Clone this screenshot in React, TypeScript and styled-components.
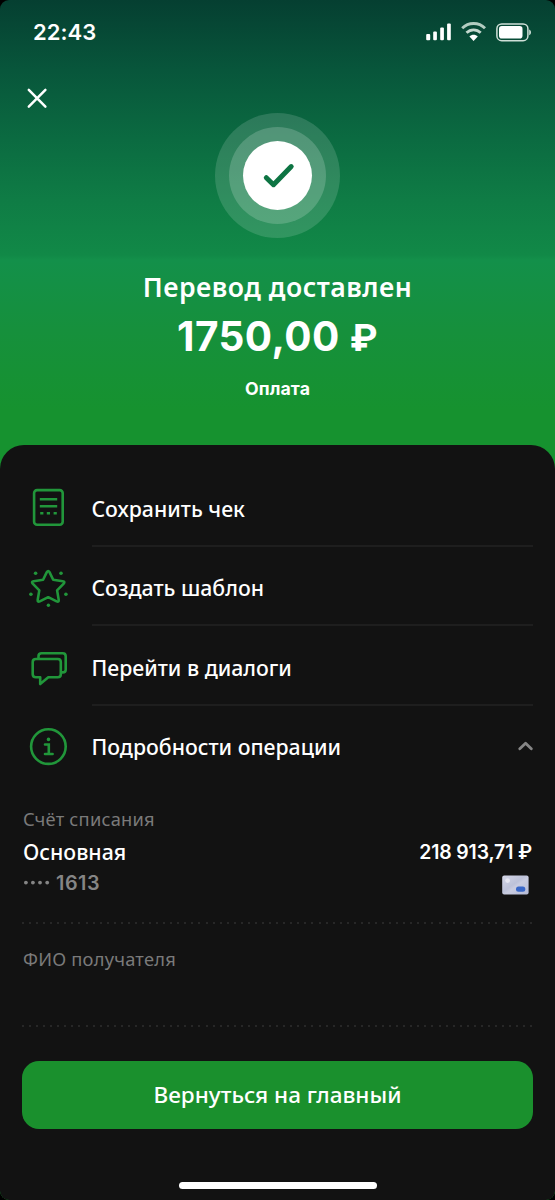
import React from "react";
import styled, { createGlobalStyle } from "styled-components";

const text = '"Noto Sans", "Open Sans", sans-serif';
const digits = 'Inter, "Liberation Sans", sans-serif';
const green = "#21963a";

const GlobalStyle = createGlobalStyle`
  *, *::before, *::after { box-sizing: border-box; }
  body { margin: 0; background: #000; }
  button { font: inherit; color: inherit; border: 0; padding: 0; background: none; }
  svg { display: block; flex: none; }
`;

const Screen = styled.div`
  width: 555px;
  height: 1200px;
  display: flex;
  flex-direction: column;
  overflow: hidden;
  border-radius: 9px;
  color: #fff;
  font-family: ${text};
  background: linear-gradient(
    180deg,
    #053f31 0px,
    #08563b 70px,
    #0b6b41 140px,
    #0f7c45 200px,
    #118947 255px,
    #13904a 260px,
    #16903c 330px,
    #16922f 410px,
    #16922f 480px
  );
`;

const StatusBar = styled.header`
  height: 64px;
  display: flex;
  align-items: center;
  justify-content: space-between;
  padding: 0 23px 0 33px;
`;

const Clock = styled.time`
  font: 600 22px/26px ${digits};
  letter-spacing: 0.05px;
`;

const StatusIcons = styled.div`
  display: flex;
  align-items: center;
  gap: 9px;
`;

const CloseButton = styled.button`
  width: 24px;
  height: 24px;
  margin: 22px 0 0 25px;
`;

const Summary = styled.section`
  display: flex;
  flex-direction: column;
  align-items: center;
  margin-top: 2.5px;
  height: 332.5px;
`;

const Ring = styled.div<{ $size: number; $fill: string }>`
  width: ${(p) => p.$size}px;
  height: ${(p) => p.$size}px;
  flex: none;
  display: flex;
  align-items: center;
  justify-content: center;
  border-radius: 50%;
  background: ${(p) => p.$fill};
`;

const Title = styled.h1`
  margin: 31.5px 0 0;
  font: 600 26.6px/36px ${text};
  letter-spacing: 0.5px;
`;

const Amount = styled.div`
  margin-top: 8px;
  font: 700 40.5px/48px ${digits};
  letter-spacing: 0.45px;
`;

const Currency = styled.span`
  font-size: 37.5px;
`;

const Purpose = styled.div`
  margin-top: 16px;
  font: 700 17.7px/22px ${digits};
  letter-spacing: 0.1px;
`;

const Sheet = styled.main`
  flex: 1;
  display: flex;
  flex-direction: column;
  padding: 22px 22px 0;
  border-radius: 24px 24px 0 0;
  background: #121212;
`;

const Action = styled.button<{ $last?: boolean }>`
  display: flex;
  align-items: center;
  height: ${(p) => (p.$last ? 80 : 79.6)}px;
  padding-left: 6px;
  text-align: left;
`;

const ActionBody = styled.span<{ $divided?: boolean }>`
  flex: 1;
  height: 100%;
  display: flex;
  align-items: center;
  justify-content: space-between;
  margin-left: 23.5px;
  padding-top: ${(p) => (p.$divided ? 6 : 2)}px;
  font: 500 21.25px/28px ${text};
  border-bottom: ${(p) => (p.$divided ? "2px solid #1e1e1e" : "0")};
`;

const Details = styled.dl`
  margin: 0;
  padding: 21px 1px 0 1px;
`;

const Caption = styled.dt`
  font: 400 18.3px/24px ${text};
  letter-spacing: 0.22px;
  color: #7a7a7a;
`;

const Account = styled.dd`
  margin: 0;
  display: flex;
  justify-content: space-between;
`;

const AccountSide = styled.div<{ $end?: boolean }>`
  display: flex;
  flex-direction: column;
  align-items: ${(p) => (p.$end ? "flex-end" : "flex-start")};
`;

const AccountName = styled.span`
  margin-top: 7px;
  font: 500 21.3px/28px ${text};
`;

const Balance = styled.span`
  margin-top: 8px;
  font: 600 19.4px/26px ${digits};
  letter-spacing: -0.12px;
`;

const CardNumber = styled.span`
  display: flex;
  align-items: center;
  gap: 6px;
  margin-top: 5px;
  font: 600 19.8px/24px ${digits};
  letter-spacing: 0.55px;
  color: #858585;
`;

const CardThumb = styled.span`
  display: block;
  margin: 10px 3px 0 0;
`;

const DottedRule = styled.hr`
  height: 2px;
  margin: 0;
  border: 0;
  background: repeating-linear-gradient(90deg, #272727 0 2px, transparent 2px 7.06px);
`;

const Recipient = styled.div`
  height: 101px;
  padding: 23px 1px 0;
`;

const HomeButton = styled.button`
  height: 68px;
  margin-top: 34px;
  border-radius: 17px;
  background: #1a902d;
  font: 500 22.5px/28px ${text};
`;

const HomeIndicator = styled.div`
  width: 198px;
  height: 7px;
  margin: 53px auto 0;
  border-radius: 4px;
  background: #fff;
`;

const SignalIcon = () => (
  <svg width="26" height="18" viewBox="0 0 26 18" fill="#fff">
    <rect x="0.2" y="11" width="4" height="6.3" rx="1" />
    <rect x="7.2" y="8.5" width="3.7" height="8.8" rx="1" />
    <rect x="14.2" y="4.5" width="3.7" height="12.8" rx="1" />
    <rect x="21.1" y="0.5" width="3.7" height="16.8" rx="1" />
  </svg>
);

const WifiIcon = () => (
  <svg width="26" height="20" viewBox="0 0 26 20" fill="none" strokeWidth="2.8">
    <path d="M1.2 6.3C7.4 -.1 17.8 -.1 24 6.3" stroke="#b3cdc1" />
    <path d="M5.5 10.8c4.1-4 10.1-4 14.2 0" stroke="#c4d8ce" />
    <path d="M8.4 14.5c2.4-2.2 6-2.2 8.4 0L12.6 18.9z" fill="#fff" />
  </svg>
);

const BatteryIcon = () => (
  <svg width="36" height="19" viewBox="0 0 36 19">
    <rect x="0.9" y="0.9" width="31" height="16.8" rx="4.8" fill="none" stroke="#cfe0d8" strokeWidth="1.5" />
    <rect x="3" y="3" width="23.5" height="12.6" rx="2.8" fill="#fff" />
    <path d="M33.2 6.5c2.4 1.1 2.4 4.6 0 5.7z" fill="#cfe0d8" />
  </svg>
);

const CloseIcon = () => (
  <svg width="24" height="24" viewBox="0 0 24 24" stroke="#fff" strokeWidth="2.5" strokeLinecap="round">
    <path d="M3.8 3.8l16.6 16.8M20.4 3.8L3.8 20.6" />
  </svg>
);

const CheckIcon = () => (
  <svg width="34" height="28" viewBox="0 0 34 28" fill="none" stroke="#0d7443" strokeWidth="5" strokeLinecap="round" strokeLinejoin="round">
    <path d="M5.3 16.7l7.2 7L30.2 5.6" />
  </svg>
);

const ReceiptIcon = () => (
  <svg width="40" height="40" viewBox="0 0 40 40" fill="none" stroke={green} strokeWidth="2.6">
    <rect x="6.1" y="3.1" width="28.6" height="34.6" rx="3" />
    <path d="M11.8 12.2h17.4M11.8 19.2h17.4M12.2 26.2h3.2M18.8 26.2H22M25.6 26.2h3.2" />
  </svg>
);

const StarIcon = () => (
  <svg width="40" height="42" viewBox="0 -2.8 40 42" fill="none" stroke={green} strokeWidth="2.6" strokeLinejoin="round">
    <path d="M18.8 4.3q1.4-2.3 2.7 0l3.7 7.7 9.5 1.4q2.7.5 1 2.5l-6.6 6.7 1.6 9.4q.3 2.7-2.1 1.6l-8.4-4.2-8.4 4.2q-2.4 1.1-2.1-1.6l1.6-9.4-6.6-6.7q-1.7-2 1-2.5l9.4-1.4z" />
    <g fill={green} stroke="none">
      <circle cx="7.6" cy="5.4" r="1.8" />
      <circle cx="33" cy="5.4" r="1.8" />
      <circle cx="2.9" cy="26.5" r="1.8" />
      <circle cx="37.9" cy="26.5" r="1.8" />
      <circle cx="20.4" cy="37.4" r="1.7" />
    </g>
  </svg>
);

const DialogIcon = () => (
  <svg width="40" height="40" viewBox="0 0 40 40" fill="none" stroke={green} strokeWidth="2.6" strokeLinejoin="round" strokeLinecap="round">
    <path d="M7.8 13h22q3 0 3 3v12.3q0 3-3 3H20.3L12.2 38v-6.7H7.7q-3 0-3-3V16q0-3 3.1-3z" />
    <path d="M10.5 12.3V10.2q0-3 3-3h21.2q3 0 3 3v13.6q0 2.6-3 2.6h-1" />
  </svg>
);

const InfoIcon = () => (
  <svg width="40" height="40" viewBox="0 0 40 40" fill="none" stroke={green} strokeWidth="2.6">
    <circle cx="20.4" cy="20.6" r="17.3" />
    <path d="M17 18.5h3.8v8.9M17 28h7.6" strokeLinecap="round" />
    <circle cx="20.5" cy="13.4" r="1.8" fill={green} stroke="none" />
  </svg>
);

const ChevronUpIcon = () => (
  <svg width="16" height="14" viewBox="0 1 16 14" fill="none" stroke="#858585" strokeWidth="2.8" strokeLinecap="round" strokeLinejoin="round">
    <path d="M2.8 9.8L8.6 4.2l5.7 5.6" />
  </svg>
);

const CardIcon = () => (
  <svg width="27" height="20" viewBox="0 0 27 20">
    <defs>
      <linearGradient id="plastic" x1="0" y1="0" x2="1" y2="1">
        <stop offset="0" stopColor="#d5d7e7" />
        <stop offset="0.45" stopColor="#bdc2d9" />
        <stop offset="0.55" stopColor="#c9cce0" />
        <stop offset="1" stopColor="#b4bad6" />
      </linearGradient>
    </defs>
    <rect x="0.2" y="0.4" width="26.4" height="19" rx="2" fill="url(#plastic)" />
    <circle cx="5.6" cy="5.6" r="2.4" fill="#e6e7f2" />
    <rect x="14" y="11.6" width="9.3" height="5.2" rx="2.5" fill="#3a68c8" />
  </svg>
);

const DotsIcon = () => (
  <svg width="27" height="6" viewBox="0 0 27 6" fill="#858585">
    {[2.9, 9.9, 17, 24.2].map((x) => (
      <circle key={x} cx={x} cy="2.6" r="1.9" />
    ))}
  </svg>
);

const actions = [
  { label: "Сохранить чек", icon: <ReceiptIcon /> },
  { label: "Создать шаблон", icon: <StarIcon /> },
  { label: "Перейти в диалоги", icon: <DialogIcon /> },
];

export default function App() {
  return (
    <>
      <GlobalStyle />
      <Screen>
        <StatusBar>
          <Clock>22:43</Clock>
          <StatusIcons>
            <SignalIcon />
            <WifiIcon />
            <BatteryIcon />
          </StatusIcons>
        </StatusBar>
        <CloseButton aria-label="Закрыть">
          <CloseIcon />
        </CloseButton>
        <Summary>
          <Ring $size={125} $fill="rgba(255,255,255,0.14)">
            <Ring $size={97} $fill="rgba(255,255,255,0.18)">
              <Ring $size={69} $fill="#fff">
                <CheckIcon />
              </Ring>
            </Ring>
          </Ring>
          <Title>Перевод доставлен</Title>
          <Amount>
            1750,00 <Currency>₽</Currency>
          </Amount>
          <Purpose>Оплата</Purpose>
        </Summary>
        <Sheet>
          {actions.map((a) => (
            <Action key={a.label}>
              {a.icon}
              <ActionBody $divided>{a.label}</ActionBody>
            </Action>
          ))}
          <Action $last>
            <InfoIcon />
            <ActionBody>
              Подробности операции
              <ChevronUpIcon />
            </ActionBody>
          </Action>
          <Details>
            <Caption>Счёт списания</Caption>
            <Account>
              <AccountSide>
                <AccountName>Основная</AccountName>
                <CardNumber>
                  <DotsIcon />
                  1613
                </CardNumber>
              </AccountSide>
              <AccountSide $end>
                <Balance>218 913,71 ₽</Balance>
                <CardThumb>
                  <CardIcon />
                </CardThumb>
              </AccountSide>
            </Account>
          </Details>
          <DottedRule style={{ marginTop: 27.2 }} />
          <Recipient>
            <Caption as="div">ФИО получателя</Caption>
          </Recipient>
          <DottedRule />
          <HomeButton>Вернуться на главный</HomeButton>
          <HomeIndicator />
        </Sheet>
      </Screen>
    </>
  );
}
